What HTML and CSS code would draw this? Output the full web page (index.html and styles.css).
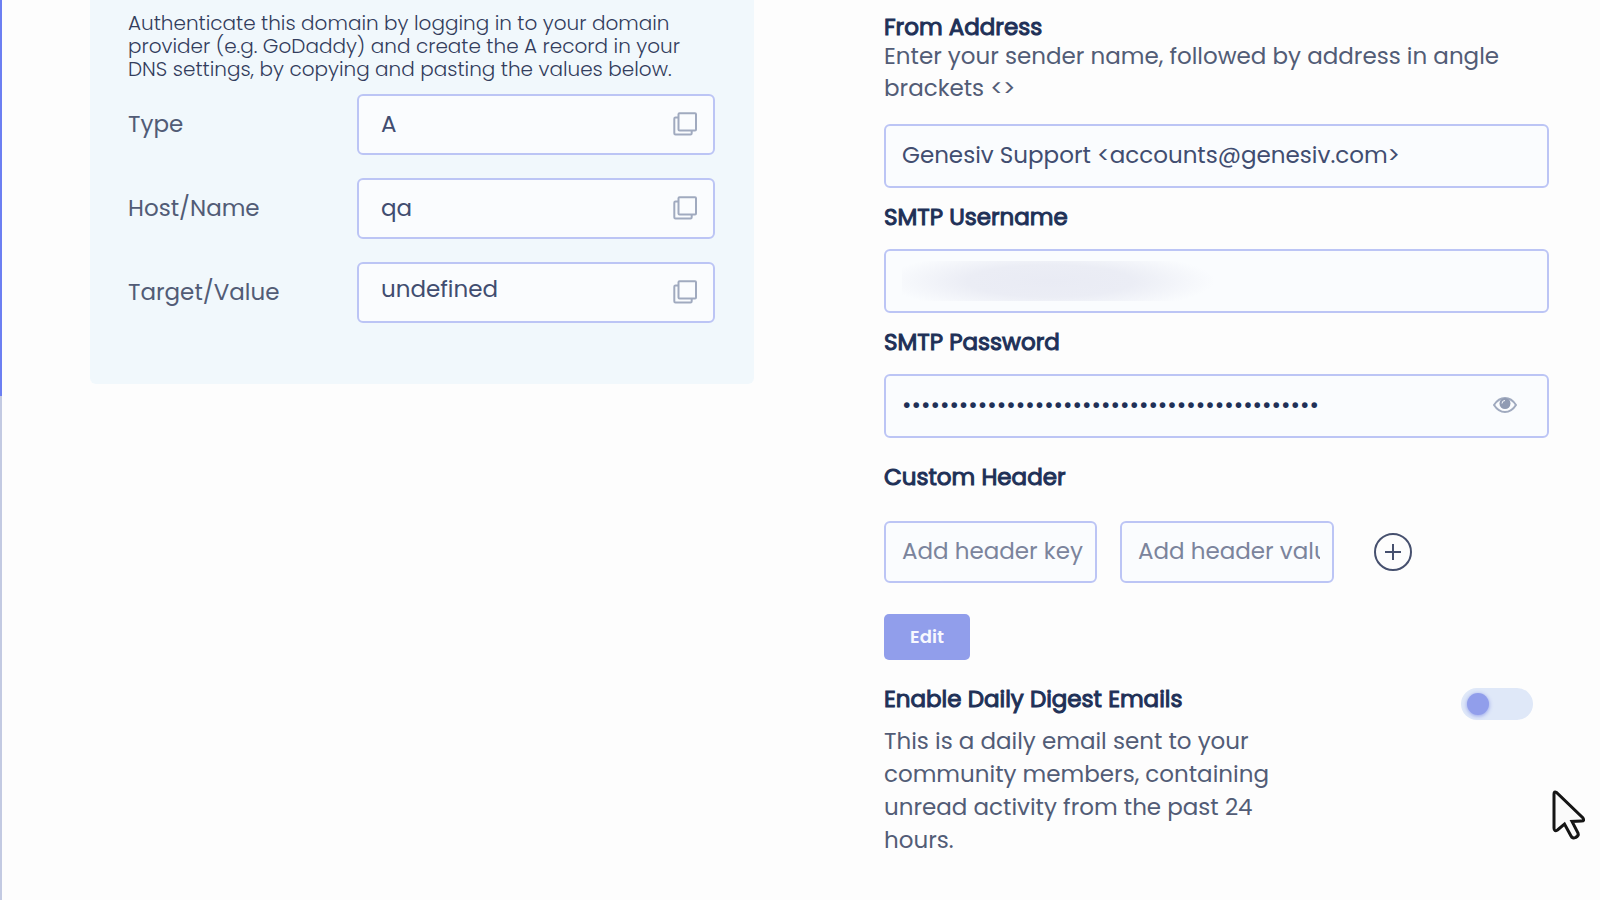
FILE: index.html
```html
<!DOCTYPE html>
<html lang="en">
<head>
<meta charset="utf-8">
<meta name="viewport" content="width=device-width, initial-scale=1">
<title>Email settings</title>
<link rel="stylesheet" href="styles.css">
</head>
<body>
<svg class="sprite" aria-hidden="true">
  <symbol id="copy" viewBox="0 0 24 24">
    <path d="M5.500 5.500H2.500Q1.300 5.500 1.300 6.700V21.300Q1.300 22.500 2.500 22.500H17.500Q18.700 22.500 18.700 21.300V18.500" />
    <rect x="5.500" y="1.300" width="17.500" height="17.200" rx="1" />
  </symbol>
</svg>
<main class="page">
  <section class="domain">
    <div class="card">
      <p class="card-note">Authenticate this domain by logging in to your domain<br>provider (e.g. GoDaddy) and create the A record in your<br>DNS settings, by copying and pasting the values below.</p>
      <div class="records">
        <div class="record">
          <label for="rec-type">Type</label>
          <div class="field">
            <input id="rec-type" type="text" value="A" readonly>
            <button class="icon-btn" type="button" aria-label="Copy type"><svg class="copy-icon"><use href="#copy"/></svg></button>
          </div>
        </div>
        <div class="record">
          <label for="rec-host">Host/Name</label>
          <div class="field">
            <input id="rec-host" type="text" value="qa" readonly>
            <button class="icon-btn" type="button" aria-label="Copy host"><svg class="copy-icon"><use href="#copy"/></svg></button>
          </div>
        </div>
        <div class="record">
          <label for="rec-target">Target/Value</label>
          <div class="field field-raised">
            <input id="rec-target" type="text" value="undefined" readonly>
            <button class="icon-btn" type="button" aria-label="Copy target"><svg class="copy-icon"><use href="#copy"/></svg></button>
          </div>
        </div>
      </div>
    </div>
  </section>

  <form class="smtp">
    <label class="title" for="from">From Address</label>
    <p class="hint">Enter your sender name, followed by address in angle<br>brackets &lt;&gt;</p>
    <div class="field field-tall from-field"><input id="from" type="text" value="Genesiv Support &lt;accounts@genesiv.com&gt;"></div>

    <label class="title stacked" for="user">SMTP Username</label>
    <div class="field field-tall"><input id="user" class="redacted" type="text"></div>

    <label class="title stacked" for="pass">SMTP Password</label>
    <div class="field field-tall">
      <input id="pass" class="secret" type="password" value="12345678901234567890123456789012345678901234">
      <button class="icon-btn" type="button" aria-label="Show password">
        <svg class="eye-icon" viewBox="0 0 24 16"><path class="eye-line" d="M1 8Q5.500 1 12 1T23 8Q18.500 15 12 15T1 8Z"/><circle class="eye-ball" cx="12" cy="6.500" r="5.500"/><path class="eye-glint" d="M9 6.500Q9 3.500 12 3.500"/></svg>
      </button>
    </div>

    <h2 class="title header-title">Custom Header</h2>
    <div class="header-row">
      <div class="field"><input type="text" placeholder="Add header key" aria-label="Header key"></div>
      <div class="field"><input type="text" placeholder="Add header value" aria-label="Header value"></div>
      <button class="add" type="button" aria-label="Add header">
        <svg class="add-icon" viewBox="0 0 38 38"><circle cx="19" cy="19" r="18"/><path d="M19 11V27M11 19H27"/></svg>
      </button>
    </div>
    <button class="edit" type="button">Edit</button>

    <div class="digest">
      <div class="digest-text">
        <label class="title" for="digest">Enable Daily Digest Emails</label>
        <p class="hint digest-hint">This is a daily email sent to your<br>community members, containing<br>unread activity from the past 24<br>hours.</p>
      </div>
      <input id="digest" class="switch" type="checkbox" role="switch">
    </div>
  </form>
</main>
<svg class="cursor" viewBox="0 0 34 50" aria-hidden="true"><path d="M2 4Q2 1 4.500 2.500L31 28Q33 31 29.500 31L20 31.500L26 43Q27 46 23.500 47.500Q20.500 49 19 46L12.500 34L5.500 40Q2 42 2 38Z"/></svg>
</body>
</html>
```

FILE: styles.css
```css
* { box-sizing: border-box; }

body {
  margin: 0;
  background: #fdfdfd;
  color: #525c76;
  font: 400 23px/32px Poppins, Inter, sans-serif;
}

p, h2 { margin: 0; }

input, button { font: inherit; }

.sprite { display: none; }

.page {
  display: grid;
  grid-template-columns: 664fr 665fr;
  column-gap: 130px;
  min-height: 100vh;
  padding: 0 51px 0 88px;
  border-left: 2px solid;
  border-image: linear-gradient(#6c7ff2 396px, #c3cae2 396px) 1;
}

.card {
  padding: 12px 39px 61px 38px;
  background: #f1f8fc;
  border-radius: 0 0 6px 6px;
}

.card-note {
  color: #333d5c;
  font-size: 20px;
  font-weight: 300;
  line-height: 23px;
  white-space: nowrap;
}

.records {
  display: grid;
  gap: 23px;
  margin-top: 13px;
}

.record {
  display: grid;
  grid-template-columns: 229px 1fr;
  align-items: center;
}

.record label { padding-bottom: 2px; }

.field {
  display: flex;
  align-items: center;
  height: 61px;
  min-width: 0;
  padding: 0 16px 0 22px;
  background: #fafcfe;
  border: 2px solid #bcc5f5;
  border-radius: 6px;
}

.field input {
  flex: 1;
  width: 0;
  min-width: 0;
  height: 100%;
  padding: 0 0 2px;
  border: 0;
  outline: 0;
  background: transparent;
  color: #414d70;
}

.field input::placeholder { color: #7b849c; opacity: 1; }

.field.field-raised input { padding-bottom: 8px; }

.icon-btn {
  display: flex;
  padding: 0 0 2px;
  border: 0;
  background: none;
}

.copy-icon {
  width: 24px;
  height: 24px;
  fill: none;
  stroke: #a0aabf;
  stroke-width: 2;
}

.smtp { padding-top: 14px; }

.title {
  display: block;
  color: #203057;
  font-size: 23px;
  font-weight: 400;
  line-height: 26px;
  -webkit-text-stroke: 1px #203057;
}

.stacked { margin: 16px 0 19px; }

.hint { white-space: nowrap; }

.field-tall, .header-row .field {
  height: 64px;
  padding: 0 16px;
}

.from-field { margin-top: 20px; }

.field .redacted {
  height: 40px;
  background: radial-gradient(ellipse 165px 32px at 148px 50%, #e9ebf4, #ebedf5 50%, transparent);
}

.field .secret { color: #203057; }

.field-tall .icon-btn { margin-right: 14px; }

.eye-icon { width: 24px; height: 16px; }
.eye-line { fill: none; stroke: #a0aabf; stroke-width: 2; }
.eye-ball { fill: #909bb3; }
.eye-glint { fill: none; stroke: #f9fbfe; stroke-width: 1; }

.header-title { margin: 26px 0 31px; }

.header-row {
  display: grid;
  grid-template-columns: 213px 214px 38px;
  column-gap: 23px;
  align-items: center;
}

.header-row .field {
  height: 62px;
  padding-right: 12px;
}

.add {
  display: flex;
  width: 38px;
  margin-left: 17px;
  padding: 0;
  border: 0;
  background: none;
}

.add-icon {
  flex: none;
  width: 38px;
  height: 38px;
  fill: none;
  stroke: #46506e;
  stroke-width: 2;
}

.edit {
  display: block;
  min-width: 86px;
  height: 46px;
  margin: 31px 0 26px;
  border: 0;
  border-radius: 5px;
  background: #919eeb;
  color: #f7f8fe;
  font-size: 18px;
  font-weight: 600;
}

.digest {
  display: flex;
  justify-content: space-between;
  align-items: flex-start;
  padding-right: 16px;
}

.digest-hint {
  margin-top: 13px;
  line-height: 33px;
}

.switch {
  appearance: none;
  width: 72px;
  height: 32px;
  margin: 2px 0 0;
  padding: 5px 6px;
  border-radius: 16px;
  background: #dfe8f8;
}

.switch::before {
  content: "";
  display: block;
  width: 22px;
  height: 22px;
  border-radius: 50%;
  background: #919eeb;
  box-shadow: 0 1px 4px #919eeb;
}

.switch:checked::before { margin-left: auto; }

.cursor {
  position: absolute;
  top: 790px;
  left: 1552px;
  width: 34px;
  height: 50px;
  fill: #fafafa;
  stroke: #151515;
  stroke-width: 3;
  pointer-events: none;
}
```
